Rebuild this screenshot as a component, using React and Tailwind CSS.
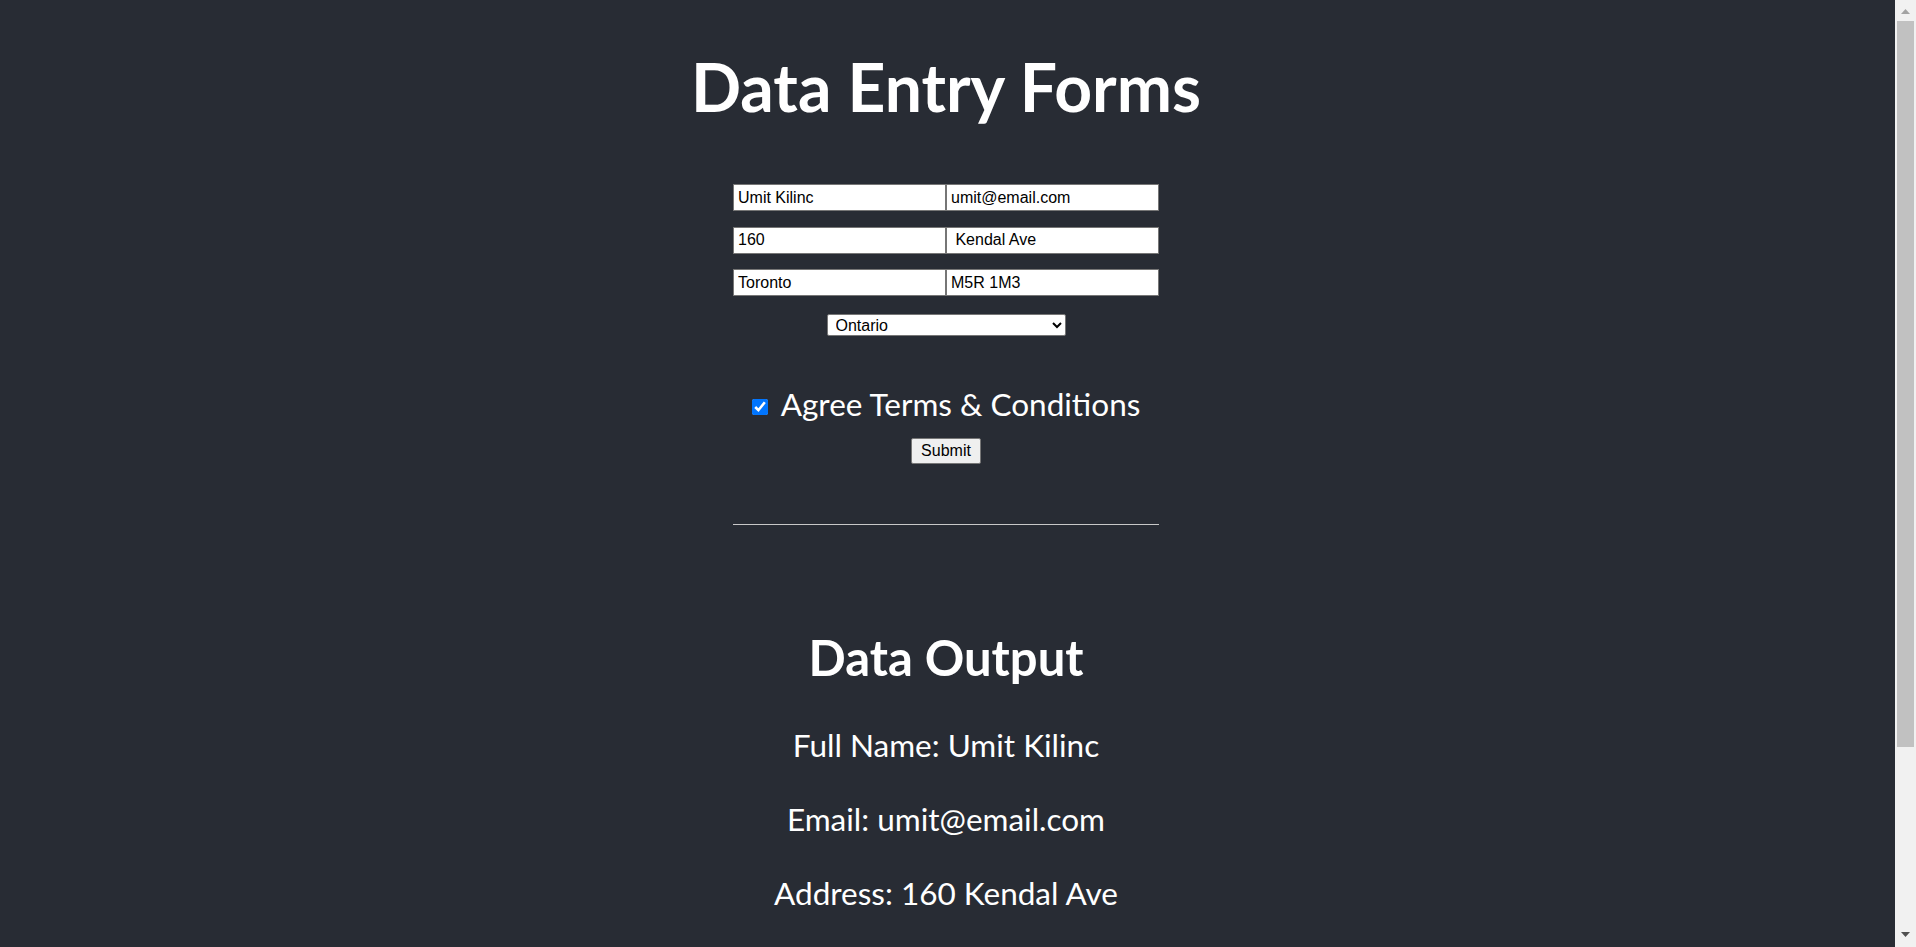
import { useState } from "react";

const provinces = ["Ontario", "Quebec", "British Columbia", "Alberta", "Manitoba", "Nova Scotia"];

const Scrollbar = () => (
  <div className="w-[21px] h-screen shrink-0 bg-[#f1f1f1] flex flex-col items-center">
    <svg className="mt-[9px] shrink-0" width="9" height="5" viewBox="0 0 9 5">
      <path d="M4.5 0L9 5H0z" fill="#a3a3a3" />
    </svg>
    <div className="mt-[7px] w-[17px] h-[726px] bg-[#c1c1c1]" />
    <div className="flex-1" />
    <svg className="mb-[10px] shrink-0" width="9" height="5" viewBox="0 0 9 5">
      <path d="M0 0h9L4.5 5z" fill="#505050" />
    </svg>
  </div>
);

const App = () => {
  const [form, setForm] = useState({
    fullName: "Umit Kilinc",
    email: "umit@email.com",
    houseNumber: "160",
    street: " Kendal Ave",
    city: "Toronto",
    postalCode: "M5R 1M3",
    province: "Ontario",
    agree: true,
  });

  const update = (key) => (e) =>
    setForm({ ...form, [key]: e.target.type === "checkbox" ? e.target.checked : e.target.value });

  const inputClass =
    "w-[213px] h-[27px] px-[4px] bg-white text-black border border-[#767676] text-[16px] font-['Liberation_Sans',Arial,sans-serif] outline-none";

  return (
    <div className="flex h-screen overflow-hidden bg-[#282c34]">
      <div className="flex-1 overflow-y-auto text-white text-center font-['Lato',sans-serif]">
        <div className="pt-[47px] pb-[44px] pr-[3px]">
          <h1 className="text-[66px] leading-[80px] font-bold">Data Entry Forms</h1>

          {/* Form */}
          <form className="mt-[57px] flex flex-col items-center" onSubmit={(e) => e.preventDefault()}>
            <div className="flex flex-col gap-[15.5px]">
              <div className="flex">
                <input className={inputClass} value={form.fullName} onChange={update("fullName")} />
                <input className={inputClass} value={form.email} onChange={update("email")} />
              </div>
              <div className="flex">
                <input className={inputClass} value={form.houseNumber} onChange={update("houseNumber")} />
                <input className={inputClass} value={form.street} onChange={update("street")} />
              </div>
              <div className="flex">
                <input className={inputClass} value={form.city} onChange={update("city")} />
                <input className={inputClass} value={form.postalCode} onChange={update("postalCode")} />
              </div>
            </div>

            <select
              className="mt-[18px] w-[239px] h-[22px] pl-[4px] bg-white text-black border border-[#767676] rounded-[2px] text-[16px] font-['Liberation_Sans',Arial,sans-serif]"
              value={form.province}
              onChange={update("province")}
            >
              {provinces.map((p) => (
                <option key={p} value={p}>
                  {p}
                </option>
              ))}
            </select>

            <label className="mt-[48px] flex items-center gap-[13px] text-[31.5px] leading-[40px]">
              <input
                type="checkbox"
                className="mt-[5px] w-[16px] h-[16px] accent-[#0075ff]"
                checked={form.agree}
                onChange={update("agree")}
              />
              Agree Terms &amp; Conditions
            </label>

            <button
              type="submit"
              className="mt-[14px] h-[26px] w-[70px] bg-[#efefef] text-black border border-[#767676] rounded-[2px] text-[16px] font-['Liberation_Sans',Arial,sans-serif]"
            >
              Submit
            </button>

            <div className="mt-[60px] w-[426px] h-px bg-[#c8c8c8]" />
          </form>

          {/* Output */}
          <h2 className="mt-[104px] text-[49px] leading-[56px] font-bold">Data Output</h2>
          <div className="mt-[40px] flex flex-col gap-[34px] text-[31.5px] leading-[40px]">
            <p>Full Name: {form.fullName}</p>
            <p>Email: {form.email}</p>
            <p>Address: {form.houseNumber} {form.street.trim()}</p>
            <p>City: {form.city}</p>
            <p>Postal Code: {form.postalCode}</p>
            <p>Province: {form.province}</p>
          </div>
        </div>
      </div>
      <Scrollbar />
    </div>
  );
};

export default App;
